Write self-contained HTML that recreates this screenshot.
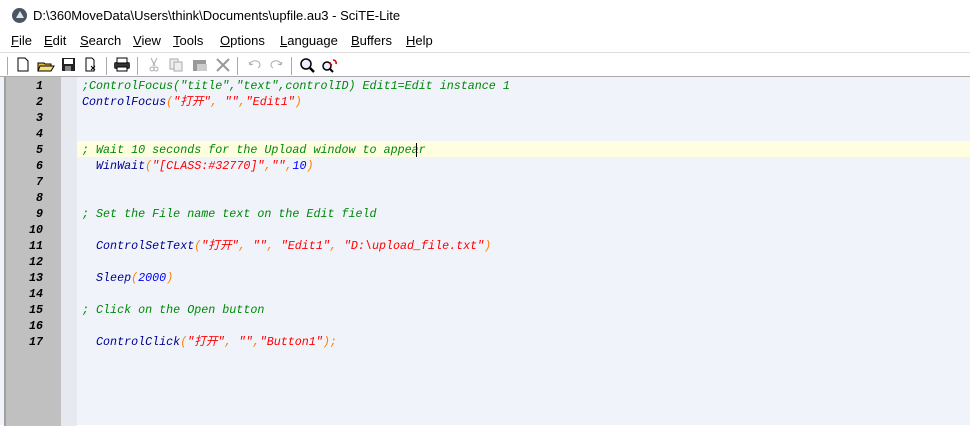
<!DOCTYPE html>
<html><head><meta charset="utf-8"><style>
*{margin:0;padding:0;box-sizing:border-box}
body{width:970px;height:425px;overflow:hidden;background:#fff;font-family:"Liberation Sans","Noto Sans CJK SC",sans-serif;position:relative}
.title{position:absolute;left:0;top:0;width:970px;height:30px;background:#fff;font-size:13px;color:#000}
.title span{position:absolute;left:33px;top:8px}
.logo{position:absolute;left:12px;top:8px;width:15px;height:15px;border-radius:50%;background:#4a5462}
.logo:after{content:"";position:absolute;left:4px;top:3px;border-left:4px solid transparent;border-right:4px solid transparent;border-bottom:7px solid #dfe3ea}
.menu{position:absolute;top:32px;left:0;height:20px;font-size:13px}
.menu span{position:absolute;top:1px;white-space:nowrap}
.menu u{text-decoration:underline}
.tb{position:absolute;top:52px;left:0;width:970px;height:24px;background:#fff;border-top:1px solid #ddd}
.sep{position:absolute;top:4px;width:1px;height:18px;background:#aaa}
.ed{position:absolute;top:76px;left:0;width:970px;height:349px;background:#f0f3f9;border-top:1px solid #aaa}
.ln{position:absolute;left:4px;top:0;width:57px;height:349px;background:#c0c0c0;border-left:2px solid #a0a0a0}
.fold{position:absolute;left:61px;top:0;width:16px;height:349px;background:#e6e9ef}
.row{position:absolute;left:0;height:16px;width:970px;font:italic 11.7px/16px "Liberation Mono","Noto Sans CJK SC",monospace;white-space:pre}
.row .n{position:absolute;right:927px;color:#000;font-weight:bold;font-style:italic;font-family:"Liberation Mono",monospace}
.row .t{position:absolute;left:82px}
.c{color:#00880a}.f{color:#000090}.s{color:#f00}.p{color:#ff8000}.d{color:#0000ff}
.hl{background:#ffffe0;left:77px;width:893px}
</style></head><body>
<div class="title"><div class="logo"></div><span>D:\360MoveData\Users\think\Documents\upfile.au3 - SciTE-Lite</span></div>
<div class="menu">
<span style="left:11px"><u>F</u>ile</span><span style="left:44px"><u>E</u>dit</span><span style="left:80px"><u>S</u>earch</span><span style="left:133px"><u>V</u>iew</span><span style="left:173px"><u>T</u>ools</span><span style="left:220px"><u>O</u>ptions</span><span style="left:280px"><u>L</u>anguage</span><span style="left:351px"><u>B</u>uffers</span><span style="left:406px"><u>H</u>elp</span>
</div>
<div class="tb">
<div class="sep" style="left:7px"></div>
<svg width="340" height="24" style="position:absolute;left:0;top:0">
<path d="M18 5h7l3 3v10H18z" fill="#fff" stroke="#000"/>
<path d="M38 10h6l1 1h6v7H38z" fill="#e8c040" stroke="#000"/><path d="M40 13h14l-3 5H38z" fill="#f8e080" stroke="#000"/>
<rect x="62" y="5" width="13" height="13" fill="#222"/><rect x="64" y="6" width="9" height="5" fill="#fff"/><rect x="65" y="13" width="6" height="5" fill="#888"/>
<path d="M86 5h6l2 2v11h-8z" fill="#fff" stroke="#000"/><path d="M91 13l4 4M95 13l-4 4" stroke="#000"/>
<rect x="114" y="9" width="16" height="7" rx="2" fill="#333"/><rect x="117" y="5" width="10" height="5" fill="#fff" stroke="#000"/><rect x="117" y="14" width="10" height="4" fill="#fff" stroke="#000"/>
<path d="M151 5l4 8M157 5l-4 8" stroke="#aaa"/><circle cx="152" cy="16" r="2" fill="none" stroke="#aaa"/><circle cx="156" cy="16" r="2" fill="none" stroke="#aaa"/>
<rect x="170" y="6" width="8" height="10" fill="#eee" stroke="#aaa"/><rect x="174" y="9" width="8" height="9" fill="#eee" stroke="#aaa"/>
<rect x="193" y="7" width="13" height="11" fill="#999"/><rect x="197" y="11" width="10" height="7" fill="#ccc"/>
<path d="M217 6l12 12M229 6l-12 12" stroke="#999" stroke-width="2"/>
<path d="M250 12a5 4 0 1 1 8 3M250 12l-1-3M250 12l3-1" fill="none" stroke="#aaa"/>
<path d="M281 12a5 4 0 1 0 -8 3M281 12l1-3M281 12l-3-1" fill="none" stroke="#aaa"/>
<circle cx="306" cy="11" r="5" fill="#eef" stroke="#000" stroke-width="1.5"/><path d="M310 15l4 4" stroke="#000" stroke-width="2.5"/>
<circle cx="327" cy="13" r="4" fill="#eef" stroke="#000" stroke-width="1.5"/><path d="M330 16l3 3" stroke="#000" stroke-width="2"/><path d="M333 7a3 3 0 0 1 3 4M332 12a3 3 0 0 1 -2-3" fill="none" stroke="#c00" stroke-width="1.5"/>
</svg>
<div class="sep" style="left:106px"></div><div class="sep" style="left:137px"></div><div class="sep" style="left:237px"></div><div class="sep" style="left:291px"></div>
</div>
<div class="ed">
<div class="ln"></div><div class="fold"></div>
</div>
<div style="position:absolute;top:78px;left:0">
<div class="row" style="top:0"><span class="n">1</span><span class="t c">;ControlFocus("title","text",controlID) Edit1=Edit instance 1</span></div>
<div class="row" style="top:16px"><span class="n">2</span><span class="t"><span class="f">ControlFocus</span><span class="p">(</span><span class="s">"打开"</span><span class="p">, </span><span class="s">""</span><span class="p">,</span><span class="s">"Edit1"</span><span class="p">)</span></span></div>
<div class="row" style="top:32px"><span class="n">3</span></div>
<div class="row" style="top:48px"><span class="n">4</span></div>
<div class="row hl" style="top:63px"></div>
<div class="row" style="top:64px"><span class="n">5</span><span class="t c">; Wait 10 seconds for the Upload window to appear</span><span style="position:absolute;left:416px;top:1px;width:1px;height:14px;background:#000"></span></div>
<div class="row" style="top:80px"><span class="n">6</span><span class="t">  <span class="f">WinWait</span><span class="p">(</span><span class="s">"[CLASS:#32770]"</span><span class="p">,</span><span class="s">""</span><span class="p">,</span><span class="d">10</span><span class="p">)</span></span></div>
<div class="row" style="top:96px"><span class="n">7</span></div>
<div class="row" style="top:112px"><span class="n">8</span></div>
<div class="row" style="top:128px"><span class="n">9</span><span class="t c">; Set the File name text on the Edit field</span></div>
<div class="row" style="top:144px"><span class="n">10</span></div>
<div class="row" style="top:160px"><span class="n">11</span><span class="t">  <span class="f">ControlSetText</span><span class="p">(</span><span class="s">"打开"</span><span class="p">, </span><span class="s">""</span><span class="p">, </span><span class="s">"Edit1"</span><span class="p">, </span><span class="s">"D:\upload_file.txt"</span><span class="p">)</span></span></div>
<div class="row" style="top:176px"><span class="n">12</span></div>
<div class="row" style="top:192px"><span class="n">13</span><span class="t">  <span class="f">Sleep</span><span class="p">(</span><span class="d">2000</span><span class="p">)</span></span></div>
<div class="row" style="top:208px"><span class="n">14</span></div>
<div class="row" style="top:224px"><span class="n">15</span><span class="t c">; Click on the Open button</span></div>
<div class="row" style="top:240px"><span class="n">16</span></div>
<div class="row" style="top:256px"><span class="n">17</span><span class="t">  <span class="f">ControlClick</span><span class="p">(</span><span class="s">"打开"</span><span class="p">, </span><span class="s">""</span><span class="p">,</span><span class="s">"Button1"</span><span class="p">);</span></span></div>
</div>
</body></html>
